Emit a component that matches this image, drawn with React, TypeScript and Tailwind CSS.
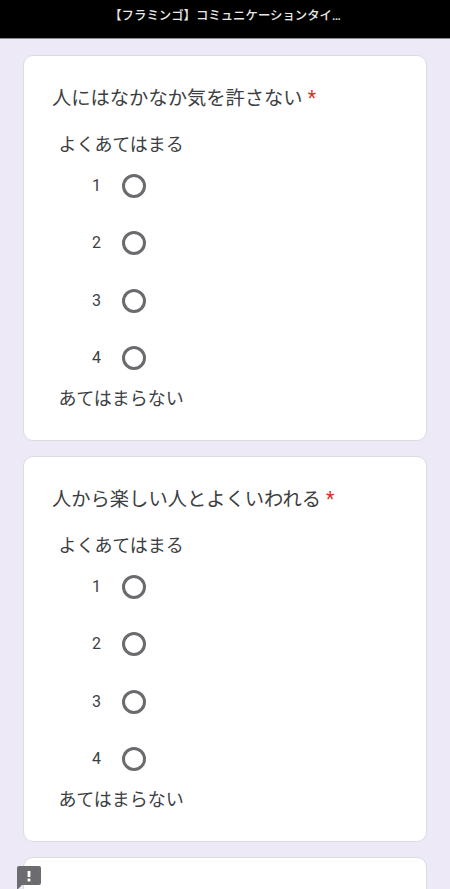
const jp = "font-['Roboto','Noto_Sans_CJK_JP',sans-serif]";

function Radio({ n }: { n: number }) {
  return (
    <div className="flex h-[57.5px] items-center">
      <span className="w-[69px] pr-[21px] text-right text-[16px] text-[#3c4043]">{n}</span>
      <span className="h-6 w-6 rounded-full border-[3px] border-[#6b6b6f]" />
    </div>
  );
}

function Question({ title }: { title: string }) {
  return (
    <section className="h-[386px] shrink-0 rounded-[10px] border border-[#dadce0] bg-white pl-[29px]">
      <h2 className="mt-[30.4px] -ml-px flex h-[26px] items-center text-[19.3px] font-normal text-[#3c4043]">
        {title}
        <span className="ml-[5px] text-[#d93025]">*</span>
      </h2>
      <p className="mt-[20px] ml-[5.5px] h-[26px] text-[18px] leading-[26px] text-[#3c4043]">よくあてはまる</p>
      <div className="mt-[-1.4px]">
        {[1, 2, 3, 4].map((n) => (
          <Radio key={n} n={n} />
        ))}
      </div>
      <p className="ml-[5.5px] mt-[-0.6px] h-[26px] text-[18px] leading-[26px] text-[#3c4043]">あてはまらない</p>
    </section>
  );
}

export default function App() {
  return (
    <div className={`relative flex h-[889px] w-full flex-col overflow-hidden bg-[#ede9f7] ${jp}`}>
      <header className="flex h-[39px] shrink-0 items-start justify-center border-b border-[#8a8a8e] bg-black pt-[7px]">
        <span className="text-[12.4px] leading-[18px] font-medium text-[#e8e8e8]">【フラミンゴ】コミュニケーションタイ…</span>
      </header>
      <main className="flex flex-col gap-[15px] px-[23px] pt-[16px]">
        <Question title="人にはなかなか気を許さない" />
        <Question title="人から楽しい人とよくいわれる" />
        <section className="h-[200px] shrink-0 rounded-[10px] border border-[#dadce0] bg-white" />
      </main>
      <svg className="absolute left-[17px] top-[866px]" width="24" height="24" viewBox="0 0 24 24" aria-hidden="true">
        <path d="M2 0h20a2 2 0 0 1 2 2v15a2 2 0 0 1-2 2H5l-5 5V2a2 2 0 0 1 2-2z" fill="#6b6b70" />
        <rect x="10.6" y="5" width="2.8" height="6" fill="#fff" />
        <rect x="10.6" y="12.6" width="2.8" height="2.8" fill="#fff" />
      </svg>
    </div>
  );
}
